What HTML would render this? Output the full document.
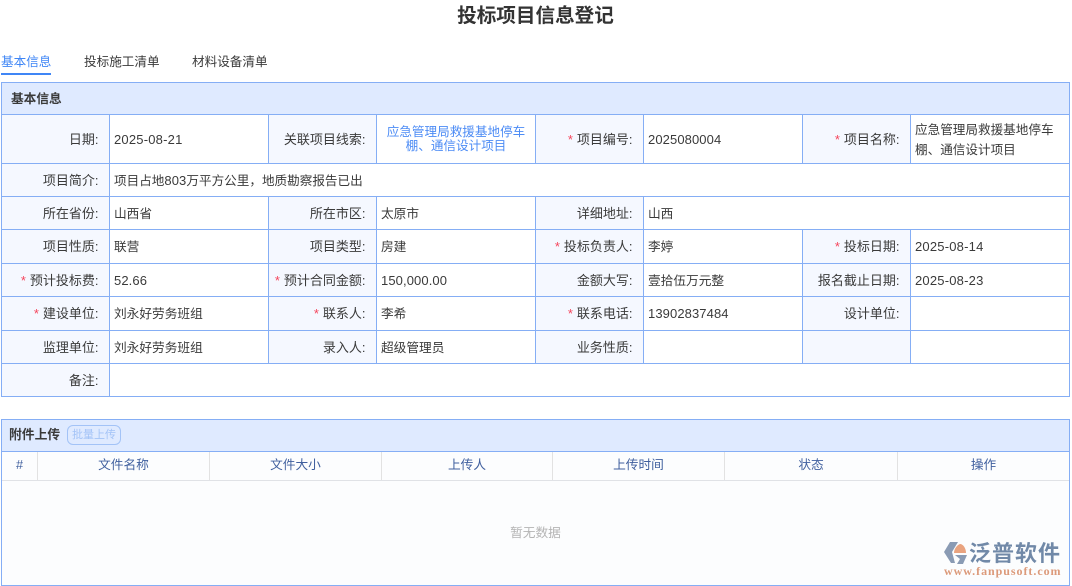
<!DOCTYPE html>
<html lang="zh-CN"><head><meta charset="utf-8"><title>投标项目信息登记</title>
<style>
html,body{margin:0;padding:0;background:#fff}
body{position:relative;width:1072px;height:586px;overflow:hidden;font-family:"Liberation Sans","Noto Sans CJK SC",sans-serif;font-size:12.7px;color:#3a3a3a}
div{box-sizing:border-box}
.a{position:absolute;white-space:nowrap}
.c{position:absolute;border:1px solid #85aef5;display:flex;align-items:center;line-height:20px;padding-top:1px}
.l{background:#f5f8ff;justify-content:flex-end;padding-right:10.5px;white-space:nowrap;font-size:13px}
.v{background:#fff;padding-left:4px;padding-right:4px}
.l i{color:#f5455c;font-style:normal;margin-right:4px}
.n{font-size:13px;letter-spacing:.1px}
.h{position:absolute;top:452px;height:29px;line-height:26px;text-align:center;color:#3f5f9e;border-right:1px solid #e2e2e2}
</style></head><body>
<div class="a" style="left:0;top:2px;width:1071px;text-align:center;font-size:19.6px;line-height:28px;font-weight:bold;color:#333">投标项目信息登记</div>

<div class="a" style="left:1px;top:53px;line-height:18px;font-size:12.6px;color:#3f86f6">基本信息</div>
<div class="a" style="left:1px;top:73px;width:50px;height:2px;background:#3f86f6"></div>
<div class="a" style="left:84px;top:53px;line-height:18px;font-size:12.6px">投标施工清单</div>
<div class="a" style="left:192px;top:53px;line-height:18px;font-size:12.6px">材料设备清单</div>

<div class="c" style="left:1px;top:82px;width:1069px;height:33px;background:#dfeaff;padding-left:9px;font-weight:bold">基本信息</div>

<div class="c l" style="left:1px;top:114px;width:109px;height:50px">日期:</div>
<div class="c v" style="left:109px;top:114px;width:160px;height:50px"><span class="n" style="letter-spacing:.2px">2025-08-21</span></div>
<div class="c l" style="left:268px;top:114px;width:109px;height:50px">关联项目线索:</div>
<div class="c v" style="left:376px;top:114px;width:160px;height:50px;color:#4d8cf5;text-align:center;line-height:14px;justify-content:center;padding:0 8px;font-size:12.6px">应急管理局救援基地停车棚、通信设计项目</div>
<div class="c l" style="left:535px;top:114px;width:109px;height:50px"><i>*</i>项目编号:</div>
<div class="c v" style="left:643px;top:114px;width:160px;height:50px"><span class="n">2025080004</span></div>
<div class="c l" style="left:802px;top:114px;width:109px;height:50px"><i>*</i>项目名称:</div>
<div class="c v" style="left:910px;top:114px;width:160px;height:50px;font-size:12.6px">应急管理局救援基地停车棚、通信设计项目</div>

<div class="c l" style="left:1px;top:163px;width:109px;height:34px">项目简介:</div>
<div class="c v" style="left:109px;top:163px;width:961px;height:34px;font-size:12.6px"><span>项目占地<span class="n">803</span>万平方公里，地质勘察报告已出</span></div>

<div class="c l" style="left:1px;top:196px;width:109px;height:34px">所在省份:</div>
<div class="c v" style="left:109px;top:196px;width:160px;height:34px">山西省</div>
<div class="c l" style="left:268px;top:196px;width:109px;height:34px">所在市区:</div>
<div class="c v" style="left:376px;top:196px;width:160px;height:34px">太原市</div>
<div class="c l" style="left:535px;top:196px;width:109px;height:34px">详细地址:</div>
<div class="c v" style="left:643px;top:196px;width:427px;height:34px">山西</div>

<div class="c l" style="left:1px;top:229px;width:109px;height:35px">项目性质:</div>
<div class="c v" style="left:109px;top:229px;width:160px;height:35px">联营</div>
<div class="c l" style="left:268px;top:229px;width:109px;height:35px">项目类型:</div>
<div class="c v" style="left:376px;top:229px;width:160px;height:35px">房建</div>
<div class="c l" style="left:535px;top:229px;width:109px;height:35px"><i>*</i>投标负责人:</div>
<div class="c v" style="left:643px;top:229px;width:160px;height:35px">李婷</div>
<div class="c l" style="left:802px;top:229px;width:109px;height:35px"><i>*</i>投标日期:</div>
<div class="c v" style="left:910px;top:229px;width:160px;height:35px"><span class="n" style="letter-spacing:.2px">2025-08-14</span></div>

<div class="c l" style="left:1px;top:263px;width:109px;height:34px"><i>*</i>预计投标费:</div>
<div class="c v" style="left:109px;top:263px;width:160px;height:34px"><span class="n">52.66</span></div>
<div class="c l" style="left:268px;top:263px;width:109px;height:34px"><i>*</i>预计合同金额:</div>
<div class="c v" style="left:376px;top:263px;width:160px;height:34px"><span class="n">150,000.00</span></div>
<div class="c l" style="left:535px;top:263px;width:109px;height:34px">金额大写:</div>
<div class="c v" style="left:643px;top:263px;width:160px;height:34px">壹拾伍万元整</div>
<div class="c l" style="left:802px;top:263px;width:109px;height:34px">报名截止日期:</div>
<div class="c v" style="left:910px;top:263px;width:160px;height:34px"><span class="n" style="letter-spacing:.2px">2025-08-23</span></div>

<div class="c l" style="left:1px;top:296px;width:109px;height:35px"><i>*</i>建设单位:</div>
<div class="c v" style="left:109px;top:296px;width:160px;height:35px">刘永好劳务班组</div>
<div class="c l" style="left:268px;top:296px;width:109px;height:35px"><i>*</i>联系人:</div>
<div class="c v" style="left:376px;top:296px;width:160px;height:35px">李希</div>
<div class="c l" style="left:535px;top:296px;width:109px;height:35px"><i>*</i>联系电话:</div>
<div class="c v" style="left:643px;top:296px;width:160px;height:35px"><span class="n">13902837484</span></div>
<div class="c l" style="left:802px;top:296px;width:109px;height:35px">设计单位:</div>
<div class="c v" style="left:910px;top:296px;width:160px;height:35px"></div>

<div class="c l" style="left:1px;top:330px;width:109px;height:34px">监理单位:</div>
<div class="c v" style="left:109px;top:330px;width:160px;height:34px">刘永好劳务班组</div>
<div class="c l" style="left:268px;top:330px;width:109px;height:34px">录入人:</div>
<div class="c v" style="left:376px;top:330px;width:160px;height:34px">超级管理员</div>
<div class="c l" style="left:535px;top:330px;width:109px;height:34px">业务性质:</div>
<div class="c v" style="left:643px;top:330px;width:160px;height:34px"></div>
<div class="c l" style="left:802px;top:330px;width:109px;height:34px"></div>
<div class="c v" style="left:910px;top:330px;width:160px;height:34px"></div>

<div class="c l" style="left:1px;top:363px;width:109px;height:34px">备注:</div>
<div class="c v" style="left:109px;top:363px;width:961px;height:34px"></div>

<div class="a" style="left:1px;top:419px;width:1069px;height:167px;border:1px solid #85aef5;background:#fcfdfe"></div>
<div class="a" style="left:1px;top:419px;width:1069px;height:33px;border:1px solid #85aef5;background:#dfeaff"></div>
<div class="a" style="left:9px;top:426px;line-height:18px;font-weight:bold;font-size:12.8px">附件上传</div>
<div class="a" style="left:67px;top:425px;width:54px;height:20px;border:1px solid #a3c3f7;border-radius:6px;font-size:11px;line-height:18px;text-align:center;color:#a3c3f7">批量上传</div>

<div class="h" style="left:2px;width:36px">#</div>
<div class="h" style="left:38px;width:172px">文件名称</div>
<div class="h" style="left:210px;width:172px">文件大小</div>
<div class="h" style="left:382px;width:171px">上传人</div>
<div class="h" style="left:553px;width:172px">上传时间</div>
<div class="h" style="left:725px;width:173px">状态</div>
<div class="h" style="left:898px;width:171px;border-right:0">操作</div>
<div class="a" style="left:2px;top:480px;width:1067px;height:1px;background:#e0e2e6"></div>
<div class="a" style="left:2px;top:524px;width:1067px;text-align:center;line-height:18px;color:#b4b4b4">暂无数据</div>

<svg class="a" style="left:943px;top:541px" width="26" height="25" viewBox="0 0 26 25">
<path d="M7 1H15L9 11 12 22H8L1 11Z" fill="#8a9bb4"/>
<path d="M17 3C20 3 23 7 23 12H11C11 8 14 4 17 3Z" fill="#e9a37f"/>
<path d="M12 14H24L20 23H14L17 18Z" fill="#8a9bb4"/>
</svg>
<div class="a" style="left:969px;top:541px;font-size:22px;line-height:26px;letter-spacing:1px;font-weight:bold;color:#7189a8">泛普软件</div>
<div class="a" style="left:944px;top:565px;font-family:'Liberation Serif',serif;font-size:12px;line-height:12px;font-weight:bold;letter-spacing:.95px;color:#dc9a7a">www.fanpusoft.com</div>
</body></html>
